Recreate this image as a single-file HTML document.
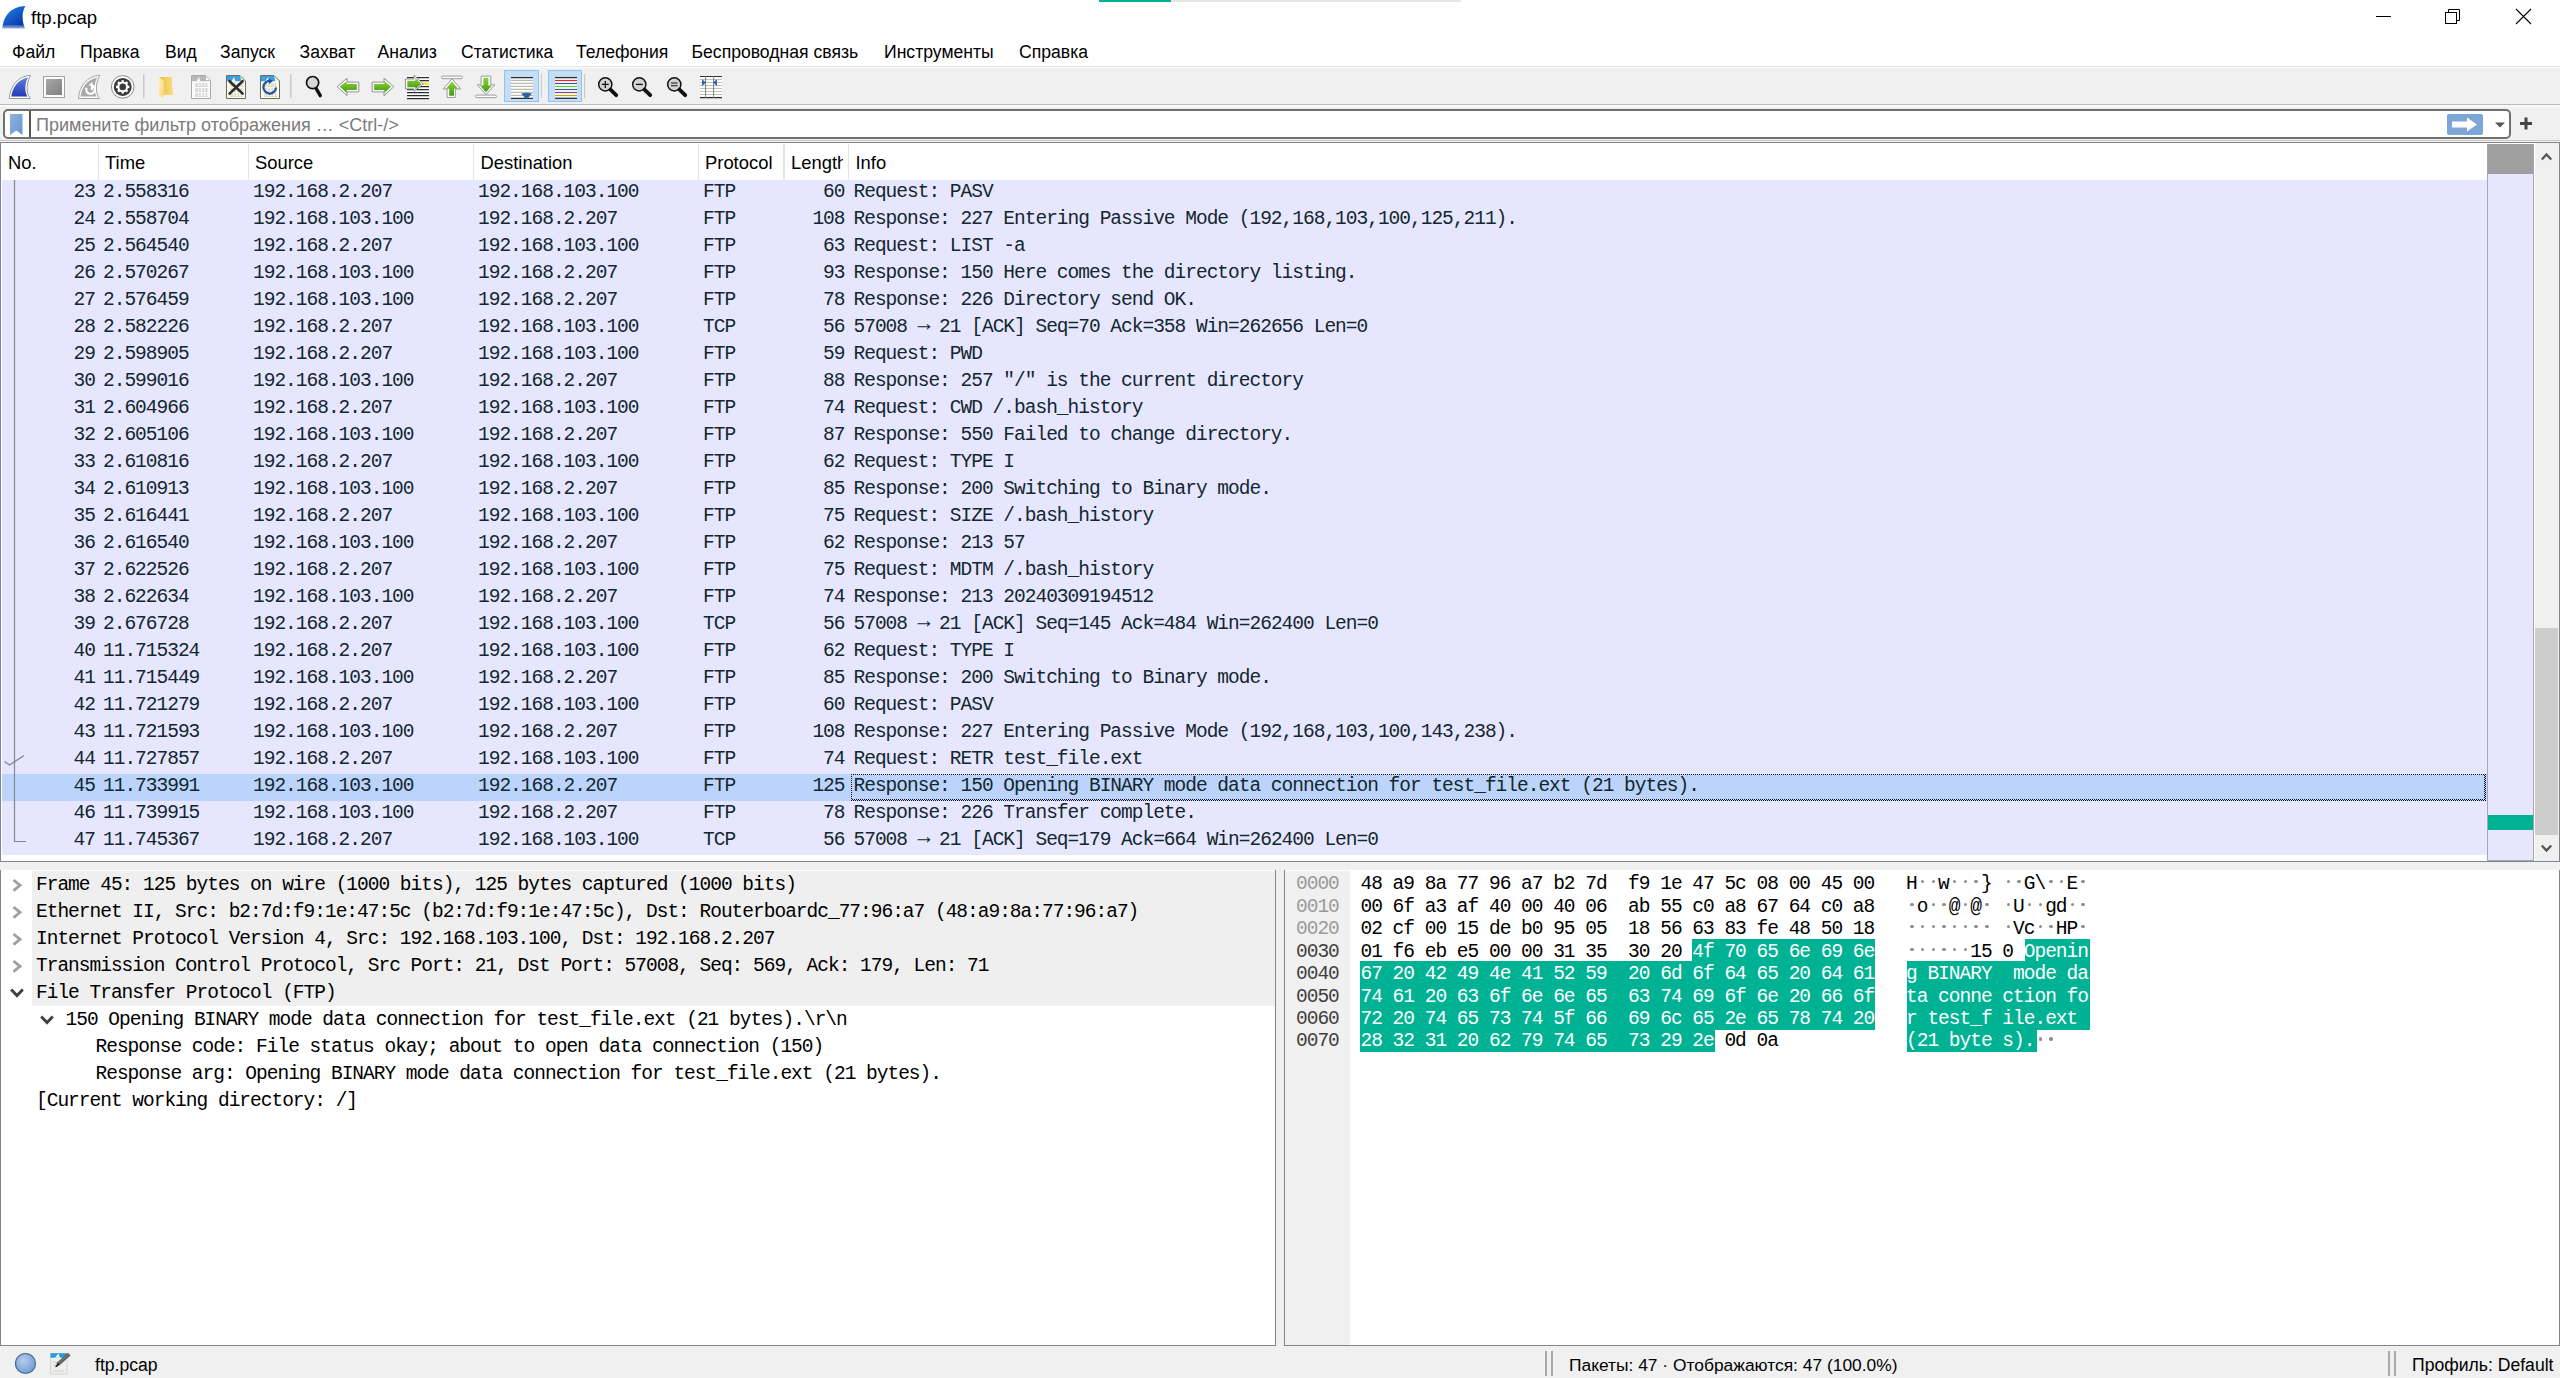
<!DOCTYPE html><html><head><meta charset='utf-8'><title>ftp.pcap</title><style>
*{margin:0;padding:0;box-sizing:border-box}
html,body{width:2560px;height:1378px;overflow:hidden;background:#fff}
body{position:relative;font-family:'Liberation Sans',sans-serif;color:#000}
.a{position:absolute}
.ui{font-family:'Liberation Sans',sans-serif;font-size:17.6px;white-space:pre;line-height:20px}
.m{font-family:'Liberation Mono',monospace;font-size:19.5px;letter-spacing:-1.0px;white-space:pre;line-height:27px}
.row{position:absolute;left:2px;width:2485px;height:27px;background:#e7e6ff;color:#12272e}
.row span{position:absolute;top:-1px}
.hx{font-family:'Liberation Mono',monospace;font-size:19.5px;letter-spacing:-1.0px;white-space:pre;line-height:22.43px}
</style></head><body>
<div class='a' style='left:1099px;top:0;width:72px;height:2px;background:#00b294'></div>
<div class='a' style='left:1171px;top:0;width:290px;height:2px;background:#e6e6e6'></div>
<svg class='a' style='left:0;top:0' width='30' height='32' viewBox='0 0 30 32'>
<defs><linearGradient id='fin' x1='0.2' y1='0.1' x2='0.8' y2='0.9'><stop offset='0' stop-color='#1f7be8'/><stop offset='1' stop-color='#0838a0'/></linearGradient>
<linearGradient id='finb' x1='0' y1='0' x2='0' y2='1'><stop offset='0' stop-color='#5f8fdc'/><stop offset='1' stop-color='#8fb0e8'/></linearGradient></defs>
<path d='M2.6 27.8 C3.2 16.5 11 6.3 25.3 6 C23.6 9 22.4 13 22.6 17 C22.8 21 23.4 24.5 24.6 27.8 Z' fill='url(#fin)'/>
<path d='M2.8 25.6 C9 25 18 25 24 25.6 L24.6 27.8 L2.6 27.8 Z' fill='url(#finb)' opacity='0.7'/>
<rect x='2.2' y='27.6' width='22.8' height='0.9' fill='#a8b0bc'/>
</svg>
<div class='a ui' style='left:31px;top:8px;font-size:18.6px'>ftp.pcap</div>
<div class='a' style='left:2376px;top:16px;width:15px;height:1px;background:#000'></div>
<svg class='a' style='left:2440px;top:4px' width='26' height='26' viewBox='0 0 26 26'>
<rect x='5.5' y='8.5' width='11' height='11' fill='none' stroke='#000' stroke-width='1'/>
<path d='M8.5 8.5 V5.5 H19.5 V16.5 H16.5' fill='none' stroke='#000' stroke-width='1'/></svg>
<svg class='a' style='left:2510px;top:4px' width='26' height='26' viewBox='0 0 26 26'>
<path d='M6 5 L21 20 M21 5 L6 20' stroke='#000' stroke-width='1.1'/></svg>
<div class='a ui' style='left:12px;top:42px'>Файл</div>
<div class='a ui' style='left:80px;top:42px'>Правка</div>
<div class='a ui' style='left:165px;top:42px'>Вид</div>
<div class='a ui' style='left:220px;top:42px'>Запуск</div>
<div class='a ui' style='left:299.5px;top:42px'>Захват</div>
<div class='a ui' style='left:377.5px;top:42px'>Анализ</div>
<div class='a ui' style='left:461px;top:42px'>Статистика</div>
<div class='a ui' style='left:576px;top:42px'>Телефония</div>
<div class='a ui' style='left:691.5px;top:42px'>Беспроводная связь</div>
<div class='a ui' style='left:884px;top:42px'>Инструменты</div>
<div class='a ui' style='left:1019px;top:42px'>Справка</div>
<div class='a' style='left:0;top:66px;width:2560px;height:38px;background:#f0f0f0;border-top:1px solid #e6e6e6'></div>
<div class='a' style='left:0;top:67px;width:2560px;height:1px;background:#fdfdfd'></div>
<div class='a' style='left:0;top:104px;width:2560px;height:1px;background:#bcbcbc'></div>
<div class='a' style='left:0;top:105px;width:2560px;height:37px;background:#f0f0f0'></div>
<div class='a' style='left:0;top:105px;width:2560px;height:2px;background:#f9f9f9'></div>

<svg class='a' style='left:0;top:66px' width='740' height='38' viewBox='0 66 740 38'>
<defs>
 <linearGradient id='gB' x1='0' y1='0' x2='0' y2='1'><stop offset='0' stop-color='#5f7fe0'/><stop offset='1' stop-color='#2438b8'/></linearGradient>
 <linearGradient id='gG' x1='0' y1='0' x2='1' y2='1'><stop offset='0' stop-color='#a8a8a8'/><stop offset='1' stop-color='#808080'/></linearGradient>
 <linearGradient id='gY' x1='0' y1='0' x2='1' y2='1'><stop offset='0' stop-color='#fde9a0'/><stop offset='1' stop-color='#f2c54a'/></linearGradient>
 <linearGradient id='gGr' x1='0' y1='0' x2='0' y2='1'><stop offset='0' stop-color='#8ed43a'/><stop offset='1' stop-color='#3f9a10'/></linearGradient>
</defs>
<!-- 1 shark fin -->
<path d='M9.3 98.5 C10 86 18 76 30.6 75.3 C28 80 26.6 86 27.3 91 C27.8 95 29.3 97 30.4 98.5 Z' fill='#fff' stroke='#9a9a9a' stroke-width='1'/>
<path d='M11.4 96.6 C12.3 87 18.5 79.5 28 77.6 C25.8 81.5 24.9 86.5 25.5 91 C25.9 93.5 26.6 95.3 27.6 96.6 Z' fill='url(#gB)'/>
<!-- 2 stop -->
<rect x='43.5' y='76.5' width='21' height='21' fill='#fff' stroke='#a3a3a3'/>
<rect x='46' y='79' width='16' height='16' fill='url(#gG)'/>
<!-- 3 restart fin -->
<path d='M78.5 98.5 C79.2 86 87.2 76 99.8 75.3 C97.2 80 95.8 86 96.5 91 C97 95 98.5 97 99.6 98.5 Z' fill='#fff' stroke='#a3a3a3' stroke-width='1'/>
<path d='M80.6 96.6 C81.5 87 87.7 79.5 97.2 77.6 C95 81.5 94.1 86 94.7 91 C95.1 93.5 95.8 95.3 96.8 96.6 Z' fill='#a9a9a9'/>
<path d='M86.6 87.8 A4.3 4.3 0 1 0 92.2 85.6 L91.6 90' fill='none' stroke='#fff' stroke-width='2.2'/>
<path d='M88.5 85.5 L92 82 L93.5 86.5 Z' fill='#fff'/>
<!-- 4 gear -->
<circle cx='122.7' cy='86.9' r='11.3' fill='#fff' stroke='#8a8a8a' stroke-width='1'/>
<circle cx='122.7' cy='86.9' r='9' fill='#3a3a3a'/>
<g fill='#fff'>
<circle cx='122.7' cy='86.9' r='5.4'/>
<rect x='121.5' y='80.2' width='2.4' height='13.4'/>
<rect x='116' y='85.7' width='13.4' height='2.4'/>
<rect x='121.5' y='80.2' width='2.4' height='13.4' transform='rotate(45 122.7 86.9)'/>
<rect x='121.5' y='80.2' width='2.4' height='13.4' transform='rotate(-45 122.7 86.9)'/>
</g>
<circle cx='122.7' cy='86.9' r='3.3' fill='#3a3a3a'/>
<!-- sep -->
<rect x='143' y='74' width='1.5' height='24' fill='#c9c9c9'/>
<!-- 5 folder -->
<defs><linearGradient id='fb' x1='0' y1='0' x2='1' y2='0'><stop offset='0' stop-color='#e6bf52'/><stop offset='1' stop-color='#fcdc78'/></linearGradient>
<linearGradient id='ff' x1='0' y1='0' x2='1' y2='1'><stop offset='0' stop-color='#fff0b8'/><stop offset='1' stop-color='#f9d977'/></linearGradient></defs>
<path d='M159.3 77 H172 V88 L173 89 V95 H163 Z' fill='url(#fb)'/>
<path d='M159.1 77.3 L163.8 80.9 V93 L163 98 L159.1 95.8 Z' fill='url(#ff)'/>
<!-- 6 file binary -->
<path d='M191.5 75.5 H205.5 L210.5 80.5 V98.5 H191.5 Z' fill='#fbfbfb' stroke='#a8a8a8' stroke-width='1'/>
<path d='M192 76 H205 L206.5 81.2 H192 Z' fill='#b8b8b8'/>
<path d='M196.5 81.2 C197.5 79.5 198.5 78 199.5 77 C199.3 78.5 199.5 80 200.5 81.2 Z' fill='#fdfdfd'/>
<path d='M205.5 76 V80.5 H210' fill='#fff' stroke='#a8a8a8' stroke-width='0.8'/>
<g font-family='Liberation Mono' font-size='5.4' font-weight='bold' fill='#c4c4c4'>
<text x='195' y='87'>0101</text><text x='195' y='91.8'>0110</text><text x='195' y='96.5'>0111</text></g>
<!-- 7 file close -->
<path d='M226.5 75.5 H240 L245.5 81 V98.5 H226.5 Z' fill='#fbfbe8' stroke='#6a6a6a'/>
<path d='M227 76 H240 L241.5 81.2 H227 Z' fill='#3aa0e0'/>
<path d='M231.5 81.2 C232.5 79.5 233.5 78 234.5 77 C234.3 78.5 234.5 80 235.5 81.2 Z' fill='#fdfdfd'/>
<g font-family='Liberation Mono' font-size='5.4' font-weight='bold' fill='#c9c9bb'><text x='230' y='87'>0101</text><text x='230' y='91.8'>0110</text><text x='230' y='96.5'>0111</text></g>
<path d='M229.6 81.2 L242.6 93.6 M242.6 81.2 L229.6 93.6' stroke='#2a2c2e' stroke-width='2.6' stroke-linecap='round'/>
<!-- 8 file reload -->
<path d='M260.5 75.5 H274 L279.5 81 V98.5 H260.5 Z' fill='#fbfbe8' stroke='#6a6a6a'/>
<path d='M261 76 H274 L275.5 81.2 H261 Z' fill='#3aa0e0'/>
<path d='M265.5 81.2 C266.5 79.5 267.5 78 268.5 77 C268.3 78.5 268.5 80 269.5 81.2 Z' fill='#fdfdfd'/>
<g font-family='Liberation Mono' font-size='5.4' font-weight='bold' fill='#c9c9bb'><text x='264' y='87'>0101</text><text x='264' y='91.8'>0110</text><text x='264' y='96.5'>0111</text></g>
<path d='M276 87.5 A6.3 6.3 0 1 1 270.5 81' fill='none' stroke='#1d4f9e' stroke-width='2.2'/>
<path d='M268.5 78.5 L273 81 L269 84 Z' fill='#1d4fa0'/>
<!-- sep -->
<rect x='290' y='74' width='1.5' height='24' fill='#c9c9c9'/>
<!-- 9 find -->
<circle cx='312.6' cy='82.6' r='6.1' fill='#d8d8d8' stroke='#111' stroke-width='1.7'/>
<path d='M316.2 88.6 L320.3 95.6' stroke='#111' stroke-width='3.4' stroke-linecap='round'/>
<!-- 10 back -->
<path d='M337.2 86.7 L347 78.2 V82.1 H358.8 V91.9 H347 V95.7 Z' fill='#fff' stroke='#8f8f8f' stroke-width='1' stroke-linejoin='round'/>
<path d='M339.9 86.7 L346.7 81 V84.1 H356.9 V90 H346.7 V93 Z' fill='url(#gGr)'/>
<!-- 11 forward -->
<path d='M393.8 86.7 L384 78.2 V82.1 H372.2 V91.9 H384 V95.7 Z' fill='#fff' stroke='#8f8f8f' stroke-width='1' stroke-linejoin='round'/>
<path d='M391.1 86.7 L384.3 81 V84.1 H374.1 V90 H384.3 V93 Z' fill='url(#gGr)'/>
<!-- 12 goto -->
<rect x='407' y='76.5' width='22' height='23' fill='#fff'/>
<path d='M407 77.6 H429 M407 80.6 H429 M407 86.6 H429 M407 89.6 H429 M407 92.6 H429 M407 95.6 H429 M407 98.6 H429' stroke='#2a2e33' stroke-width='1.2'/>
<rect x='423' y='82.3' width='6' height='2.6' fill='#f7e23c'/>
<path d='M405.4 79 H414 V75.2 L423.3 83.9 L414 91.3 V88.9 H405.4 Z' fill='#fff' stroke='#8f8f8f' stroke-width='1' stroke-linejoin='round'/>
<path d='M407.3 80.8 H415.3 V77.8 L421.4 83.9 L415.3 89.3 V87.2 H407.3 Z' fill='url(#gGr)'/>
<!-- 13 first -->
<rect x='441.5' y='76.1' width='21' height='2.6' rx='1.3' fill='#fff' stroke='#8f8f8f' stroke-width='0.9'/>
<path d='M452 78.8 L460.8 89 H455.3 V97.5 H447.1 V89 H443.2 Z' fill='#fff' stroke='#8f8f8f' stroke-width='0.9' stroke-linejoin='round'/>
<path d='M452 81.5 L458 88.8 H454 V95.8 H449.2 V88.8 H446 Z' fill='url(#gGr)'/>
<!-- 14 last -->
<rect x='475.5' y='95.1' width='21' height='2.6' rx='1.3' fill='#fff' stroke='#8f8f8f' stroke-width='0.9'/>
<path d='M486 94.5 L494.7 84.8 H490.8 V76.1 H481.1 V84.8 H477.2 Z' fill='#fff' stroke='#8f8f8f' stroke-width='0.9' stroke-linejoin='round'/>
<path d='M486 92.2 L492 85.6 H488.4 V77.8 H483.4 V85.6 H480 Z' fill='url(#gGr)'/>
<!-- 15 autoscroll pressed -->
<rect x='504.5' y='70.5' width='34' height='31' fill='#c5def5' stroke='#8cc4f2'/>
<rect x='511' y='77' width='22' height='22' fill='#fff'/>
<path d='M511 80.3 H533 M511 83.3 H533 M511 86.4 H533 M511 89.4 H533 M511 92.4 H533 M511 95.4 H533' stroke='#b9bbae' stroke-width='1.2'/>
<path d='M511 77.6 H533 M511 98.3 H533' stroke='#2b2f33' stroke-width='1.3'/>
<path d='M521.2 93.6 Q526.5 91.8 532 93.6 L527.8 98.6 H525.4 Z' fill='#2f62a8'/>
<!-- sep -->
<rect x='540.8' y='74' width='1.2' height='24' fill='#cfcfcf'/>
<!-- 16 colorize pressed -->
<rect x='548.5' y='70.5' width='33' height='31' fill='#c5def5' stroke='#8cc4f2'/>
<rect x='555' y='77' width='22' height='22' fill='#fff'/>
<path d='M555 77.6 H577' stroke='#2b2f33' stroke-width='1.3'/>
<path d='M555 80.5 H577' stroke='#ec2424' stroke-width='1.2'/>
<path d='M555 83.5 H577' stroke='#2d5aa8' stroke-width='1.2'/>
<path d='M555 86.5 H577' stroke='#5ecc20' stroke-width='1.2'/>
<path d='M555 89.5 H577' stroke='#2d5aa8' stroke-width='1.2'/>
<path d='M555 92.5 H577' stroke='#7a4a8e' stroke-width='1.2'/>
<path d='M555 95.5 H577' stroke='#cda10c' stroke-width='1.2'/>
<path d='M555 98.3 H577' stroke='#2b2f33' stroke-width='1.3'/>
<!-- sep -->
<rect x='584' y='74' width='1.2' height='24' fill='#c9c9c9'/>
<!-- zoom in/out/reset -->
<g>
<circle cx='605.3' cy='84.4' r='6.6' fill='#d3d3d3' stroke='#111' stroke-width='1.5'/>
<path d='M610.5 89.6 L616.2 95.2' stroke='#111' stroke-width='3.8' stroke-linecap='round'/>
<path d='M601.8 84.4 H608.8 M605.3 80.9 V87.9' stroke='#111' stroke-width='1.3'/>
<circle cx='639.3' cy='84.4' r='6.6' fill='#d3d3d3' stroke='#111' stroke-width='1.5'/>
<path d='M644.5 89.6 L650.2 95.2' stroke='#111' stroke-width='3.8' stroke-linecap='round'/>
<path d='M636 84.4 H642.8' stroke='#111' stroke-width='1.3'/>
<circle cx='674.3' cy='84.4' r='6.6' fill='#d3d3d3' stroke='#111' stroke-width='1.5'/>
<path d='M679.5 89.6 L685.2 95.2' stroke='#111' stroke-width='3.8' stroke-linecap='round'/>
<path d='M671 83 H677.6 M671 85.7 H677.6' stroke='#111' stroke-width='1.1'/>
</g>
<!-- resize columns -->
<rect x='700' y='76' width='22' height='22' fill='#fff'/>
<path d='M700 79.5 H722 M700 82.5 H722 M700 85.5 H722 M700 88.5 H722 M700 91.5 H722 M700 94.5 H722' stroke='#c0c2b6' stroke-width='1.1'/>
<path d='M700 76.5 H722 M700 97.6 H722' stroke='#2b2f33' stroke-width='1.2'/>
<path d='M705.6 76 V98 M713.6 76 V98' stroke='#7c7c7c' stroke-width='1'/>
<path d='M702 79.3 L706 82.6 L702 86 Z M717 79.3 L713 82.6 L717 86 Z' fill='#2f62b0'/>
</svg>

<div class='a' style='left:3px;top:109px;width:2508px;height:30px;background:#fff;border:2px solid #707070;border-radius:5px'></div>
<div class='a' style='left:29px;top:111px;width:2px;height:26px;background:#555'></div>
<svg class='a' style='left:8px;top:112px' width='18' height='26' viewBox='0 0 18 26'>
<defs><linearGradient id='bm' x1='0' y1='0' x2='1' y2='1'><stop offset='0' stop-color='#8fb4e0'/><stop offset='1' stop-color='#6796d0'/></linearGradient></defs>
<path d='M2 2 H14.5 V23 L8.25 18.5 L2 23 Z' fill='url(#bm)'/></svg>
<div class='a ui' style='left:36px;top:115px;color:#7b7b7b;font-size:18px'>Примените фильтр отображения … &lt;Ctrl-/&gt;</div>
<svg class='a' style='left:2446px;top:113px' width='40' height='24' viewBox='0 0 40 24'>
<rect x='1' y='1' width='36' height='21' rx='2' fill='#7ca6d8'/>
<path d='M6 8.5 H21 V4.5 L31 11.5 L21 18.5 V14.5 H6 Z' fill='#fff'/></svg>
<svg class='a' style='left:2491.5px;top:118.6px' width='16' height='12' viewBox='0 0 16 12'>
<path d='M3 3.5 H13 L8 8.5 Z' fill='#555'/></svg>
<svg class='a' style='left:2516px;top:113.4px' width='20' height='20' viewBox='0 0 20 20'>
<path d='M4 10.5 H16 M10 4.5 V16.5' stroke='#444' stroke-width='3'/></svg>
<div class='a' style='left:0;top:140px;width:2560px;height:1px;background:#c9c9c9'></div>
<div class='a' style='left:0;top:142px;width:2560px;height:720px;border:1px solid #7f8690;background:#fff'></div>
<div class='a' style='left:97.8px;top:144px;width:1.5px;height:36px;background:#e5e5e5'></div>
<div class='a' style='left:247.8px;top:144px;width:1.5px;height:36px;background:#e5e5e5'></div>
<div class='a' style='left:472.8px;top:144px;width:1.5px;height:36px;background:#e5e5e5'></div>
<div class='a' style='left:697.8px;top:144px;width:1.5px;height:36px;background:#e5e5e5'></div>
<div class='a' style='left:783.4px;top:144px;width:1.5px;height:36px;background:#e5e5e5'></div>
<div class='a' style='left:847.8px;top:144px;width:1.5px;height:36px;background:#e5e5e5'></div>
<div class='a ui' style='left:8px;top:153px;width:200px;overflow:hidden;font-size:18.4px'>No.</div>
<div class='a ui' style='left:105px;top:153px;width:200px;overflow:hidden;font-size:18.4px'>Time</div>
<div class='a ui' style='left:255px;top:153px;width:200px;overflow:hidden;font-size:18.4px'>Source</div>
<div class='a ui' style='left:480.5px;top:153px;width:200px;overflow:hidden;font-size:18.4px'>Destination</div>
<div class='a ui' style='left:705px;top:153px;width:200px;overflow:hidden;font-size:18.4px'>Protocol</div>
<div class='a ui' style='left:791px;top:153px;width:52px;overflow:hidden;font-size:18.4px'>Length</div>
<div class='a ui' style='left:855.5px;top:153px;width:200px;overflow:hidden;font-size:18.4px'>Info</div>
<div class='row m' style='top:180px;background:#e7e6ff'>
<span style='left:71.6px'>23</span>
<span style='left:101px'>2.558316</span>
<span style='left:251px'>192.168.2.207</span>
<span style='left:476px'>192.168.103.100</span>
<span style='left:701px'>FTP</span>
<span style='left:821.1px'>60</span>
<span style='left:851.5px'>Request: PASV</span>
</div>
<div class='row m' style='top:207px;background:#e7e6ff'>
<span style='left:71.6px'>24</span>
<span style='left:101px'>2.558704</span>
<span style='left:251px'>192.168.103.100</span>
<span style='left:476px'>192.168.2.207</span>
<span style='left:701px'>FTP</span>
<span style='left:810.4px'>108</span>
<span style='left:851.5px'>Response: 227 Entering Passive Mode (192,168,103,100,125,211).</span>
</div>
<div class='row m' style='top:234px;background:#e7e6ff'>
<span style='left:71.6px'>25</span>
<span style='left:101px'>2.564540</span>
<span style='left:251px'>192.168.2.207</span>
<span style='left:476px'>192.168.103.100</span>
<span style='left:701px'>FTP</span>
<span style='left:821.1px'>63</span>
<span style='left:851.5px'>Request: LIST -a</span>
</div>
<div class='row m' style='top:261px;background:#e7e6ff'>
<span style='left:71.6px'>26</span>
<span style='left:101px'>2.570267</span>
<span style='left:251px'>192.168.103.100</span>
<span style='left:476px'>192.168.2.207</span>
<span style='left:701px'>FTP</span>
<span style='left:821.1px'>93</span>
<span style='left:851.5px'>Response: 150 Here comes the directory listing.</span>
</div>
<div class='row m' style='top:288px;background:#e7e6ff'>
<span style='left:71.6px'>27</span>
<span style='left:101px'>2.576459</span>
<span style='left:251px'>192.168.103.100</span>
<span style='left:476px'>192.168.2.207</span>
<span style='left:701px'>FTP</span>
<span style='left:821.1px'>78</span>
<span style='left:851.5px'>Response: 226 Directory send OK.</span>
</div>
<div class='row m' style='top:315px;background:#e7e6ff'>
<span style='left:71.6px'>28</span>
<span style='left:101px'>2.582226</span>
<span style='left:251px'>192.168.2.207</span>
<span style='left:476px'>192.168.103.100</span>
<span style='left:701px'>TCP</span>
<span style='left:821.1px'>56</span>
<span style='left:851.5px'>57008 <i style='font-style:normal;position:relative;top:-2px;display:inline-block;transform:scale(1.1,1.25)'>→</i> 21 [ACK] Seq=70 Ack=358 Win=262656 Len=0</span>
</div>
<div class='row m' style='top:342px;background:#e7e6ff'>
<span style='left:71.6px'>29</span>
<span style='left:101px'>2.598905</span>
<span style='left:251px'>192.168.2.207</span>
<span style='left:476px'>192.168.103.100</span>
<span style='left:701px'>FTP</span>
<span style='left:821.1px'>59</span>
<span style='left:851.5px'>Request: PWD</span>
</div>
<div class='row m' style='top:369px;background:#e7e6ff'>
<span style='left:71.6px'>30</span>
<span style='left:101px'>2.599016</span>
<span style='left:251px'>192.168.103.100</span>
<span style='left:476px'>192.168.2.207</span>
<span style='left:701px'>FTP</span>
<span style='left:821.1px'>88</span>
<span style='left:851.5px'>Response: 257 &quot;/&quot; is the current directory</span>
</div>
<div class='row m' style='top:396px;background:#e7e6ff'>
<span style='left:71.6px'>31</span>
<span style='left:101px'>2.604966</span>
<span style='left:251px'>192.168.2.207</span>
<span style='left:476px'>192.168.103.100</span>
<span style='left:701px'>FTP</span>
<span style='left:821.1px'>74</span>
<span style='left:851.5px'>Request: CWD /.bash_history</span>
</div>
<div class='row m' style='top:423px;background:#e7e6ff'>
<span style='left:71.6px'>32</span>
<span style='left:101px'>2.605106</span>
<span style='left:251px'>192.168.103.100</span>
<span style='left:476px'>192.168.2.207</span>
<span style='left:701px'>FTP</span>
<span style='left:821.1px'>87</span>
<span style='left:851.5px'>Response: 550 Failed to change directory.</span>
</div>
<div class='row m' style='top:450px;background:#e7e6ff'>
<span style='left:71.6px'>33</span>
<span style='left:101px'>2.610816</span>
<span style='left:251px'>192.168.2.207</span>
<span style='left:476px'>192.168.103.100</span>
<span style='left:701px'>FTP</span>
<span style='left:821.1px'>62</span>
<span style='left:851.5px'>Request: TYPE I</span>
</div>
<div class='row m' style='top:477px;background:#e7e6ff'>
<span style='left:71.6px'>34</span>
<span style='left:101px'>2.610913</span>
<span style='left:251px'>192.168.103.100</span>
<span style='left:476px'>192.168.2.207</span>
<span style='left:701px'>FTP</span>
<span style='left:821.1px'>85</span>
<span style='left:851.5px'>Response: 200 Switching to Binary mode.</span>
</div>
<div class='row m' style='top:504px;background:#e7e6ff'>
<span style='left:71.6px'>35</span>
<span style='left:101px'>2.616441</span>
<span style='left:251px'>192.168.2.207</span>
<span style='left:476px'>192.168.103.100</span>
<span style='left:701px'>FTP</span>
<span style='left:821.1px'>75</span>
<span style='left:851.5px'>Request: SIZE /.bash_history</span>
</div>
<div class='row m' style='top:531px;background:#e7e6ff'>
<span style='left:71.6px'>36</span>
<span style='left:101px'>2.616540</span>
<span style='left:251px'>192.168.103.100</span>
<span style='left:476px'>192.168.2.207</span>
<span style='left:701px'>FTP</span>
<span style='left:821.1px'>62</span>
<span style='left:851.5px'>Response: 213 57</span>
</div>
<div class='row m' style='top:558px;background:#e7e6ff'>
<span style='left:71.6px'>37</span>
<span style='left:101px'>2.622526</span>
<span style='left:251px'>192.168.2.207</span>
<span style='left:476px'>192.168.103.100</span>
<span style='left:701px'>FTP</span>
<span style='left:821.1px'>75</span>
<span style='left:851.5px'>Request: MDTM /.bash_history</span>
</div>
<div class='row m' style='top:585px;background:#e7e6ff'>
<span style='left:71.6px'>38</span>
<span style='left:101px'>2.622634</span>
<span style='left:251px'>192.168.103.100</span>
<span style='left:476px'>192.168.2.207</span>
<span style='left:701px'>FTP</span>
<span style='left:821.1px'>74</span>
<span style='left:851.5px'>Response: 213 20240309194512</span>
</div>
<div class='row m' style='top:612px;background:#e7e6ff'>
<span style='left:71.6px'>39</span>
<span style='left:101px'>2.676728</span>
<span style='left:251px'>192.168.2.207</span>
<span style='left:476px'>192.168.103.100</span>
<span style='left:701px'>TCP</span>
<span style='left:821.1px'>56</span>
<span style='left:851.5px'>57008 <i style='font-style:normal;position:relative;top:-2px;display:inline-block;transform:scale(1.1,1.25)'>→</i> 21 [ACK] Seq=145 Ack=484 Win=262400 Len=0</span>
</div>
<div class='row m' style='top:639px;background:#e7e6ff'>
<span style='left:71.6px'>40</span>
<span style='left:101px'>11.715324</span>
<span style='left:251px'>192.168.2.207</span>
<span style='left:476px'>192.168.103.100</span>
<span style='left:701px'>FTP</span>
<span style='left:821.1px'>62</span>
<span style='left:851.5px'>Request: TYPE I</span>
</div>
<div class='row m' style='top:666px;background:#e7e6ff'>
<span style='left:71.6px'>41</span>
<span style='left:101px'>11.715449</span>
<span style='left:251px'>192.168.103.100</span>
<span style='left:476px'>192.168.2.207</span>
<span style='left:701px'>FTP</span>
<span style='left:821.1px'>85</span>
<span style='left:851.5px'>Response: 200 Switching to Binary mode.</span>
</div>
<div class='row m' style='top:693px;background:#e7e6ff'>
<span style='left:71.6px'>42</span>
<span style='left:101px'>11.721279</span>
<span style='left:251px'>192.168.2.207</span>
<span style='left:476px'>192.168.103.100</span>
<span style='left:701px'>FTP</span>
<span style='left:821.1px'>60</span>
<span style='left:851.5px'>Request: PASV</span>
</div>
<div class='row m' style='top:720px;background:#e7e6ff'>
<span style='left:71.6px'>43</span>
<span style='left:101px'>11.721593</span>
<span style='left:251px'>192.168.103.100</span>
<span style='left:476px'>192.168.2.207</span>
<span style='left:701px'>FTP</span>
<span style='left:810.4px'>108</span>
<span style='left:851.5px'>Response: 227 Entering Passive Mode (192,168,103,100,143,238).</span>
</div>
<div class='row m' style='top:747px;background:#e7e6ff'>
<span style='left:71.6px'>44</span>
<span style='left:101px'>11.727857</span>
<span style='left:251px'>192.168.2.207</span>
<span style='left:476px'>192.168.103.100</span>
<span style='left:701px'>FTP</span>
<span style='left:821.1px'>74</span>
<span style='left:851.5px'>Request: RETR test_file.ext</span>
</div>
<div class='row m' style='top:774px;background:#bcd4fb'>
<span style='left:71.6px'>45</span>
<span style='left:101px'>11.733991</span>
<span style='left:251px'>192.168.103.100</span>
<span style='left:476px'>192.168.2.207</span>
<span style='left:701px'>FTP</span>
<span style='left:810.4px'>125</span>
<span style='left:851.5px'>Response: 150 Opening BINARY mode data connection for test_file.ext (21 bytes).</span>
</div>
<div class='row m' style='top:801px;background:#e7e6ff'>
<span style='left:71.6px'>46</span>
<span style='left:101px'>11.739915</span>
<span style='left:251px'>192.168.103.100</span>
<span style='left:476px'>192.168.2.207</span>
<span style='left:701px'>FTP</span>
<span style='left:821.1px'>78</span>
<span style='left:851.5px'>Response: 226 Transfer complete.</span>
</div>
<div class='row m' style='top:828px;background:#e7e6ff'>
<span style='left:71.6px'>47</span>
<span style='left:101px'>11.745367</span>
<span style='left:251px'>192.168.2.207</span>
<span style='left:476px'>192.168.103.100</span>
<span style='left:701px'>TCP</span>
<span style='left:821.1px'>56</span>
<span style='left:851.5px'>57008 <i style='font-style:normal;position:relative;top:-2px;display:inline-block;transform:scale(1.1,1.25)'>→</i> 21 [ACK] Seq=179 Ack=664 Win=262400 Len=0</span>
</div>
<svg class='a' style='left:851px;top:774px' width='1636' height='27' viewBox='0 0 1636 27' shape-rendering='crispEdges'>
<defs><pattern id='dh' width='2' height='1' patternUnits='userSpaceOnUse'><rect x='0' y='0' width='1' height='1' fill='#111'/></pattern>
<pattern id='dv' width='1' height='2' patternUnits='userSpaceOnUse'><rect x='0' y='0' width='1' height='1' fill='#111'/></pattern>
<pattern id='ck' width='2' height='2' patternUnits='userSpaceOnUse'><rect x='0' y='0' width='1' height='1' fill='#111'/><rect x='1' y='1' width='1' height='1' fill='#111'/></pattern></defs>
<rect x='0' y='0' width='1635' height='1' fill='url(#dh)'/>
<rect x='0' y='0' width='1' height='25' fill='url(#dv)'/>
<rect x='0' y='25' width='1635' height='2' fill='url(#ck)'/>
<rect x='1633' y='0' width='2' height='27' fill='url(#ck)'/>
</svg>
<svg class='a' style='left:0;top:180px' width='30' height='680' viewBox='0 180 30 680'>
<path d='M14.5 180 V841.5 H26' fill='none' stroke='#7f8a8e' stroke-width='1.2'/>
<path d='M4.5 761.5 L9.5 765 L24 755.5' fill='none' stroke='#7f8a8e' stroke-width='1.4'/>
</svg>
<div class='a' style='left:2487px;top:144px;width:47px;height:717px;background:#e7e6ff;border-left:1px solid #a8a8a8;border-right:1px solid #a8a8a8;border-bottom:1px solid #a8a8a8'></div>
<div class='a' style='left:2488px;top:144px;width:45px;height:30px;background:#a0a0a0'></div>
<div class='a' style='left:2488px;top:815px;width:45px;height:15px;background:#00b294'></div>
<div class='a' style='left:2534px;top:143px;width:25px;height:718px;background:#f0f0f0;border-left:1px solid #fff'></div>
<div class='a' style='left:2535px;top:628px;width:23px;height:207px;background:#cdcdcd'></div>
<svg class='a' style='left:2536px;top:148px' width='22' height='16' viewBox='0 0 22 16'>
<path d='M5.8 11.6 L10.5 6.4 L15.2 11.6' fill='none' stroke='#555' stroke-width='2.3'/></svg>
<svg class='a' style='left:2536px;top:840px' width='22' height='16' viewBox='0 0 22 16'>
<path d='M5.8 5.4 L10.5 10.6 L15.2 5.4' fill='none' stroke='#555' stroke-width='2.3'/></svg>
<div class='a' style='left:0;top:862px;width:2560px;height:8px;background:#f0f0f0'></div>
<div class='a' style='left:1276px;top:870px;width:8px;height:476px;background:#f0f0f0'></div>
<div class='a' style='left:0;top:870px;width:1276px;height:476px;background:#fff;border-left:1px solid #7f8690;border-right:1px solid #7f8690;border-bottom:1px solid #7f8690'></div>
<div class='a' style='left:32px;top:871px;width:1243px;height:135px;background:#efefef'></div>
<div class='a m' style='left:36px;top:872px'>Frame 45: 125 bytes on wire (1000 bits), 125 bytes captured (1000 bits)</div>
<svg class='a' style='left:9px;top:871px' width='16' height='27' viewBox='0 0 16 27'><path d='M4.5 9 L11 14.3 L4.5 19.6' fill='none' stroke='#a0a0a0' stroke-width='2.9'/></svg>
<div class='a m' style='left:36px;top:899px'>Ethernet II, Src: b2:7d:f9:1e:47:5c (b2:7d:f9:1e:47:5c), Dst: Routerboardc_77:96:a7 (48:a9:8a:77:96:a7)</div>
<svg class='a' style='left:9px;top:898px' width='16' height='27' viewBox='0 0 16 27'><path d='M4.5 9 L11 14.3 L4.5 19.6' fill='none' stroke='#a0a0a0' stroke-width='2.9'/></svg>
<div class='a m' style='left:36px;top:926px'>Internet Protocol Version 4, Src: 192.168.103.100, Dst: 192.168.2.207</div>
<svg class='a' style='left:9px;top:925px' width='16' height='27' viewBox='0 0 16 27'><path d='M4.5 9 L11 14.3 L4.5 19.6' fill='none' stroke='#a0a0a0' stroke-width='2.9'/></svg>
<div class='a m' style='left:36px;top:953px'>Transmission Control Protocol, Src Port: 21, Dst Port: 57008, Seq: 569, Ack: 179, Len: 71</div>
<svg class='a' style='left:9px;top:952px' width='16' height='27' viewBox='0 0 16 27'><path d='M4.5 9 L11 14.3 L4.5 19.6' fill='none' stroke='#a0a0a0' stroke-width='2.9'/></svg>
<div class='a m' style='left:36px;top:980px'>File Transfer Protocol (FTP)</div>
<svg class='a' style='left:9px;top:979px' width='16' height='27' viewBox='0 0 16 27'><path d='M2.2 10.6 L8 16.6 L13.8 10.6' fill='none' stroke='#404040' stroke-width='2.9'/></svg>
<div class='a m' style='left:65.5px;top:1007px'>150 Opening BINARY mode data connection for test_file.ext (21 bytes).\r\n</div>
<svg class='a' style='left:38.5px;top:1006px' width='16' height='27' viewBox='0 0 16 27'><path d='M2.2 10.6 L8 16.6 L13.8 10.6' fill='none' stroke='#404040' stroke-width='2.9'/></svg>
<div class='a m' style='left:95.5px;top:1034px'>Response code: File status okay; about to open data connection (150)</div>
<div class='a m' style='left:95.5px;top:1061px'>Response arg: Opening BINARY mode data connection for test_file.ext (21 bytes).</div>
<div class='a m' style='left:36px;top:1088px'>[Current working directory: /]</div>
<div class='a' style='left:1284px;top:870px;width:1276px;height:476px;background:#fff;border-left:1px solid #7f8690;border-right:1px solid #7f8690;border-bottom:1px solid #7f8690'></div>
<div class='a' style='left:1285px;top:871px;width:65px;height:474px;background:#f0f0f0'></div>
<div class='a hx' style='left:1296px;top:873.20px;color:#9a9a9a'>0000</div>
<div class='a hx' style='left:1360.5px;top:873.20px'><span style='color:#000'>48</span> <span style='color:#000'>a9</span> <span style='color:#000'>8a</span> <span style='color:#000'>77</span> <span style='color:#000'>96</span> <span style='color:#000'>a7</span> <span style='color:#000'>b2</span> <span style='color:#000'>7d</span>  <span style='color:#000'>f9</span> <span style='color:#000'>1e</span> <span style='color:#000'>47</span> <span style='color:#000'>5c</span> <span style='color:#000'>08</span> <span style='color:#000'>00</span> <span style='color:#000'>45</span> <span style='color:#000'>00</span></div>
<div class='a' style='left:1920.95px;top:880.10px;width:3.4px;height:3.4px;border-radius:50%;background:#8e8e8e'></div>
<div class='a' style='left:1931.65px;top:880.10px;width:3.4px;height:3.4px;border-radius:50%;background:#8e8e8e'></div>
<div class='a' style='left:1953.05px;top:880.10px;width:3.4px;height:3.4px;border-radius:50%;background:#8e8e8e'></div>
<div class='a' style='left:1963.75px;top:880.10px;width:3.4px;height:3.4px;border-radius:50%;background:#8e8e8e'></div>
<div class='a' style='left:1974.45px;top:880.10px;width:3.4px;height:3.4px;border-radius:50%;background:#8e8e8e'></div>
<div class='a' style='left:2006.55px;top:880.10px;width:3.4px;height:3.4px;border-radius:50%;background:#8e8e8e'></div>
<div class='a' style='left:2017.25px;top:880.10px;width:3.4px;height:3.4px;border-radius:50%;background:#8e8e8e'></div>
<div class='a' style='left:2049.35px;top:880.10px;width:3.4px;height:3.4px;border-radius:50%;background:#8e8e8e'></div>
<div class='a' style='left:2060.05px;top:880.10px;width:3.4px;height:3.4px;border-radius:50%;background:#8e8e8e'></div>
<div class='a' style='left:2081.45px;top:880.10px;width:3.4px;height:3.4px;border-radius:50%;background:#8e8e8e'></div>
<div class='a hx' style='left:1906.0px;top:873.20px'><span style='color:#000'>H</span>  <span style='color:#000'>w</span>   <span style='color:#000'>}</span>   <span style='color:#000'>G</span><span style='color:#000'>\</span>  <span style='color:#000'>E</span> </div>
<div class='a hx' style='left:1296px;top:895.67px;color:#9a9a9a'>0010</div>
<div class='a hx' style='left:1360.5px;top:895.67px'><span style='color:#000'>00</span> <span style='color:#000'>6f</span> <span style='color:#000'>a3</span> <span style='color:#000'>af</span> <span style='color:#000'>40</span> <span style='color:#000'>00</span> <span style='color:#000'>40</span> <span style='color:#000'>06</span>  <span style='color:#000'>ab</span> <span style='color:#000'>55</span> <span style='color:#000'>c0</span> <span style='color:#000'>a8</span> <span style='color:#000'>67</span> <span style='color:#000'>64</span> <span style='color:#000'>c0</span> <span style='color:#000'>a8</span></div>
<div class='a' style='left:1910.25px;top:902.57px;width:3.4px;height:3.4px;border-radius:50%;background:#8e8e8e'></div>
<div class='a' style='left:1931.65px;top:902.57px;width:3.4px;height:3.4px;border-radius:50%;background:#8e8e8e'></div>
<div class='a' style='left:1942.35px;top:902.57px;width:3.4px;height:3.4px;border-radius:50%;background:#8e8e8e'></div>
<div class='a' style='left:1963.75px;top:902.57px;width:3.4px;height:3.4px;border-radius:50%;background:#8e8e8e'></div>
<div class='a' style='left:1985.15px;top:902.57px;width:3.4px;height:3.4px;border-radius:50%;background:#8e8e8e'></div>
<div class='a' style='left:2006.55px;top:902.57px;width:3.4px;height:3.4px;border-radius:50%;background:#8e8e8e'></div>
<div class='a' style='left:2027.95px;top:902.57px;width:3.4px;height:3.4px;border-radius:50%;background:#8e8e8e'></div>
<div class='a' style='left:2038.65px;top:902.57px;width:3.4px;height:3.4px;border-radius:50%;background:#8e8e8e'></div>
<div class='a' style='left:2070.75px;top:902.57px;width:3.4px;height:3.4px;border-radius:50%;background:#8e8e8e'></div>
<div class='a' style='left:2081.45px;top:902.57px;width:3.4px;height:3.4px;border-radius:50%;background:#8e8e8e'></div>
<div class='a hx' style='left:1906.0px;top:895.67px'> <span style='color:#000'>o</span>  <span style='color:#000'>@</span> <span style='color:#000'>@</span>   <span style='color:#000'>U</span>  <span style='color:#000'>g</span><span style='color:#000'>d</span>  </div>
<div class='a hx' style='left:1296px;top:918.14px;color:#9a9a9a'>0020</div>
<div class='a hx' style='left:1360.5px;top:918.14px'><span style='color:#000'>02</span> <span style='color:#000'>cf</span> <span style='color:#000'>00</span> <span style='color:#000'>15</span> <span style='color:#000'>de</span> <span style='color:#000'>b0</span> <span style='color:#000'>95</span> <span style='color:#000'>05</span>  <span style='color:#000'>18</span> <span style='color:#000'>56</span> <span style='color:#000'>63</span> <span style='color:#000'>83</span> <span style='color:#000'>fe</span> <span style='color:#000'>48</span> <span style='color:#000'>50</span> <span style='color:#000'>18</span></div>
<div class='a' style='left:1910.25px;top:925.04px;width:3.4px;height:3.4px;border-radius:50%;background:#8e8e8e'></div>
<div class='a' style='left:1920.95px;top:925.04px;width:3.4px;height:3.4px;border-radius:50%;background:#8e8e8e'></div>
<div class='a' style='left:1931.65px;top:925.04px;width:3.4px;height:3.4px;border-radius:50%;background:#8e8e8e'></div>
<div class='a' style='left:1942.35px;top:925.04px;width:3.4px;height:3.4px;border-radius:50%;background:#8e8e8e'></div>
<div class='a' style='left:1953.05px;top:925.04px;width:3.4px;height:3.4px;border-radius:50%;background:#8e8e8e'></div>
<div class='a' style='left:1963.75px;top:925.04px;width:3.4px;height:3.4px;border-radius:50%;background:#8e8e8e'></div>
<div class='a' style='left:1974.45px;top:925.04px;width:3.4px;height:3.4px;border-radius:50%;background:#8e8e8e'></div>
<div class='a' style='left:1985.15px;top:925.04px;width:3.4px;height:3.4px;border-radius:50%;background:#8e8e8e'></div>
<div class='a' style='left:2006.55px;top:925.04px;width:3.4px;height:3.4px;border-radius:50%;background:#8e8e8e'></div>
<div class='a' style='left:2038.65px;top:925.04px;width:3.4px;height:3.4px;border-radius:50%;background:#8e8e8e'></div>
<div class='a' style='left:2049.35px;top:925.04px;width:3.4px;height:3.4px;border-radius:50%;background:#8e8e8e'></div>
<div class='a' style='left:2081.45px;top:925.04px;width:3.4px;height:3.4px;border-radius:50%;background:#8e8e8e'></div>
<div class='a hx' style='left:1906.0px;top:918.14px'>          <span style='color:#000'>V</span><span style='color:#000'>c</span>  <span style='color:#000'>H</span><span style='color:#000'>P</span> </div>
<div class='a hx' style='left:1296px;top:940.61px;color:#3f3f3f'>0030</div>
<div class='a' style='left:1691.70px;top:938.81px;width:183.50px;height:23.67px;background:#00b294'></div>
<div class='a' style='left:2024.50px;top:938.81px;width:65.60px;height:23.67px;background:#00b294'></div>
<div class='a hx' style='left:1360.5px;top:940.61px'><span style='color:#000'>01</span> <span style='color:#000'>f6</span> <span style='color:#000'>eb</span> <span style='color:#000'>e5</span> <span style='color:#000'>00</span> <span style='color:#000'>00</span> <span style='color:#000'>31</span> <span style='color:#000'>35</span>  <span style='color:#000'>30</span> <span style='color:#000'>20</span> <span style='color:#fff'>4f</span> <span style='color:#fff'>70</span> <span style='color:#fff'>65</span> <span style='color:#fff'>6e</span> <span style='color:#fff'>69</span> <span style='color:#fff'>6e</span></div>
<div class='a' style='left:1910.25px;top:947.51px;width:3.4px;height:3.4px;border-radius:50%;background:#8e8e8e'></div>
<div class='a' style='left:1920.95px;top:947.51px;width:3.4px;height:3.4px;border-radius:50%;background:#8e8e8e'></div>
<div class='a' style='left:1931.65px;top:947.51px;width:3.4px;height:3.4px;border-radius:50%;background:#8e8e8e'></div>
<div class='a' style='left:1942.35px;top:947.51px;width:3.4px;height:3.4px;border-radius:50%;background:#8e8e8e'></div>
<div class='a' style='left:1953.05px;top:947.51px;width:3.4px;height:3.4px;border-radius:50%;background:#8e8e8e'></div>
<div class='a' style='left:1963.75px;top:947.51px;width:3.4px;height:3.4px;border-radius:50%;background:#8e8e8e'></div>
<div class='a hx' style='left:1906.0px;top:940.61px'>      <span style='color:#000'>1</span><span style='color:#000'>5</span> <span style='color:#000'>0</span><span style='color:#000'> </span><span style='color:#fff'>O</span><span style='color:#fff'>p</span><span style='color:#fff'>e</span><span style='color:#fff'>n</span><span style='color:#fff'>i</span><span style='color:#fff'>n</span></div>
<div class='a hx' style='left:1296px;top:963.08px;color:#3f3f3f'>0040</div>
<div class='a' style='left:1360.00px;top:961.28px;width:515.20px;height:23.67px;background:#00b294'></div>
<div class='a' style='left:1906.80px;top:961.28px;width:183.30px;height:23.67px;background:#00b294'></div>
<div class='a hx' style='left:1360.5px;top:963.08px'><span style='color:#fff'>67</span> <span style='color:#fff'>20</span> <span style='color:#fff'>42</span> <span style='color:#fff'>49</span> <span style='color:#fff'>4e</span> <span style='color:#fff'>41</span> <span style='color:#fff'>52</span> <span style='color:#fff'>59</span>  <span style='color:#fff'>20</span> <span style='color:#fff'>6d</span> <span style='color:#fff'>6f</span> <span style='color:#fff'>64</span> <span style='color:#fff'>65</span> <span style='color:#fff'>20</span> <span style='color:#fff'>64</span> <span style='color:#fff'>61</span></div>
<div class='a hx' style='left:1906.0px;top:963.08px'><span style='color:#fff'>g</span><span style='color:#fff'> </span><span style='color:#fff'>B</span><span style='color:#fff'>I</span><span style='color:#fff'>N</span><span style='color:#fff'>A</span><span style='color:#fff'>R</span><span style='color:#fff'>Y</span> <span style='color:#fff'> </span><span style='color:#fff'>m</span><span style='color:#fff'>o</span><span style='color:#fff'>d</span><span style='color:#fff'>e</span><span style='color:#fff'> </span><span style='color:#fff'>d</span><span style='color:#fff'>a</span></div>
<div class='a hx' style='left:1296px;top:985.55px;color:#3f3f3f'>0050</div>
<div class='a' style='left:1360.00px;top:983.75px;width:515.20px;height:23.67px;background:#00b294'></div>
<div class='a' style='left:1906.80px;top:983.75px;width:183.30px;height:23.67px;background:#00b294'></div>
<div class='a hx' style='left:1360.5px;top:985.55px'><span style='color:#fff'>74</span> <span style='color:#fff'>61</span> <span style='color:#fff'>20</span> <span style='color:#fff'>63</span> <span style='color:#fff'>6f</span> <span style='color:#fff'>6e</span> <span style='color:#fff'>6e</span> <span style='color:#fff'>65</span>  <span style='color:#fff'>63</span> <span style='color:#fff'>74</span> <span style='color:#fff'>69</span> <span style='color:#fff'>6f</span> <span style='color:#fff'>6e</span> <span style='color:#fff'>20</span> <span style='color:#fff'>66</span> <span style='color:#fff'>6f</span></div>
<div class='a hx' style='left:1906.0px;top:985.55px'><span style='color:#fff'>t</span><span style='color:#fff'>a</span><span style='color:#fff'> </span><span style='color:#fff'>c</span><span style='color:#fff'>o</span><span style='color:#fff'>n</span><span style='color:#fff'>n</span><span style='color:#fff'>e</span> <span style='color:#fff'>c</span><span style='color:#fff'>t</span><span style='color:#fff'>i</span><span style='color:#fff'>o</span><span style='color:#fff'>n</span><span style='color:#fff'> </span><span style='color:#fff'>f</span><span style='color:#fff'>o</span></div>
<div class='a hx' style='left:1296px;top:1008.02px;color:#3f3f3f'>0060</div>
<div class='a' style='left:1360.00px;top:1006.22px;width:515.20px;height:23.67px;background:#00b294'></div>
<div class='a' style='left:1906.80px;top:1006.22px;width:183.30px;height:23.67px;background:#00b294'></div>
<div class='a hx' style='left:1360.5px;top:1008.02px'><span style='color:#fff'>72</span> <span style='color:#fff'>20</span> <span style='color:#fff'>74</span> <span style='color:#fff'>65</span> <span style='color:#fff'>73</span> <span style='color:#fff'>74</span> <span style='color:#fff'>5f</span> <span style='color:#fff'>66</span>  <span style='color:#fff'>69</span> <span style='color:#fff'>6c</span> <span style='color:#fff'>65</span> <span style='color:#fff'>2e</span> <span style='color:#fff'>65</span> <span style='color:#fff'>78</span> <span style='color:#fff'>74</span> <span style='color:#fff'>20</span></div>
<div class='a hx' style='left:1906.0px;top:1008.02px'><span style='color:#fff'>r</span><span style='color:#fff'> </span><span style='color:#fff'>t</span><span style='color:#fff'>e</span><span style='color:#fff'>s</span><span style='color:#fff'>t</span><span style='color:#fff'>_</span><span style='color:#fff'>f</span> <span style='color:#fff'>i</span><span style='color:#fff'>l</span><span style='color:#fff'>e</span><span style='color:#fff'>.</span><span style='color:#fff'>e</span><span style='color:#fff'>x</span><span style='color:#fff'>t</span><span style='color:#fff'> </span></div>
<div class='a hx' style='left:1296px;top:1030.49px;color:#3f3f3f'>0070</div>
<div class='a' style='left:1360.00px;top:1028.69px;width:354.70px;height:23.67px;background:#00b294'></div>
<div class='a' style='left:1906.80px;top:1028.69px;width:129.80px;height:23.67px;background:#00b294'></div>
<div class='a hx' style='left:1360.5px;top:1030.49px'><span style='color:#fff'>28</span> <span style='color:#fff'>32</span> <span style='color:#fff'>31</span> <span style='color:#fff'>20</span> <span style='color:#fff'>62</span> <span style='color:#fff'>79</span> <span style='color:#fff'>74</span> <span style='color:#fff'>65</span>  <span style='color:#fff'>73</span> <span style='color:#fff'>29</span> <span style='color:#fff'>2e</span> <span style='color:#000'>0d</span> <span style='color:#000'>0a</span></div>
<div class='a' style='left:2038.65px;top:1037.39px;width:3.4px;height:3.4px;border-radius:50%;background:#8e8e8e'></div>
<div class='a' style='left:2049.35px;top:1037.39px;width:3.4px;height:3.4px;border-radius:50%;background:#8e8e8e'></div>
<div class='a hx' style='left:1906.0px;top:1030.49px'><span style='color:#fff'>(</span><span style='color:#fff'>2</span><span style='color:#fff'>1</span><span style='color:#fff'> </span><span style='color:#fff'>b</span><span style='color:#fff'>y</span><span style='color:#fff'>t</span><span style='color:#fff'>e</span> <span style='color:#fff'>s</span><span style='color:#fff'>)</span><span style='color:#fff'>.</span>  </div>
<div class='a' style='left:0;top:1346px;width:2560px;height:32px;background:#f0f0f0'></div>
<svg class='a' style='left:12px;top:1350px' width='28' height='28' viewBox='0 0 28 28'>
<defs><radialGradient id='sb' cx='0.4' cy='0.35' r='0.7'><stop offset='0' stop-color='#b4cdea'/><stop offset='1' stop-color='#6d9ad6'/></radialGradient></defs>
<circle cx='13.5' cy='13.5' r='10' fill='url(#sb)' stroke='#4d6a8a' stroke-width='1.2'/></svg>
<svg class='a' style='left:48px;top:1351px' width='26' height='26' viewBox='0 0 26 26'>
<rect x='2.5' y='2.5' width='16.5' height='20.5' fill='#eeeeea' stroke='#d6d6d0' stroke-width='1'/>
<rect x='2.5' y='2.2' width='16.5' height='4.5' fill='#2b9be0'/>
<path d='M7 6.7 C8.5 5 9.5 3.5 10.5 2.2 C10.8 4 11.2 5.5 12.5 6.7 Z' fill='#f4f4f0'/>
<path d='M5 11 H15 M5 14 H12 M5 20 H16' stroke='#d0d0cc' stroke-width='1'/>
<path d='M9.5 13.6 L21.3 3.2' stroke='#5c5c5c' stroke-width='3.6' stroke-linecap='butt'/>
<path d='M9.8 12.8 L21 3' stroke='#8a8a8a' stroke-width='1'/>
<path d='M7.6 15.6 L10.6 12.4 L9.2 15 Z' fill='#222' stroke='#222' stroke-width='1.2'/>
</svg>
<div class='a ui' style='left:95px;top:1355px'>ftp.pcap</div>
<div class='a' style='left:1545px;top:1351px;width:1.5px;height:25px;background:#a8a8a8'></div>
<div class='a' style='left:1551px;top:1351px;width:1.5px;height:25px;background:#a8a8a8'></div>
<div class='a' style='left:2388px;top:1351px;width:1.5px;height:25px;background:#a8a8a8'></div>
<div class='a' style='left:2394px;top:1351px;width:1.5px;height:25px;background:#a8a8a8'></div>
<div class='a ui' style='left:1569px;top:1355px;font-size:17.4px'>Пакеты: 47 · Отображаются: 47 (100.0%)</div>
<div class='a ui' style='left:2412px;top:1355px;font-size:17.6px'>Профиль: Default</div>
</body></html>
